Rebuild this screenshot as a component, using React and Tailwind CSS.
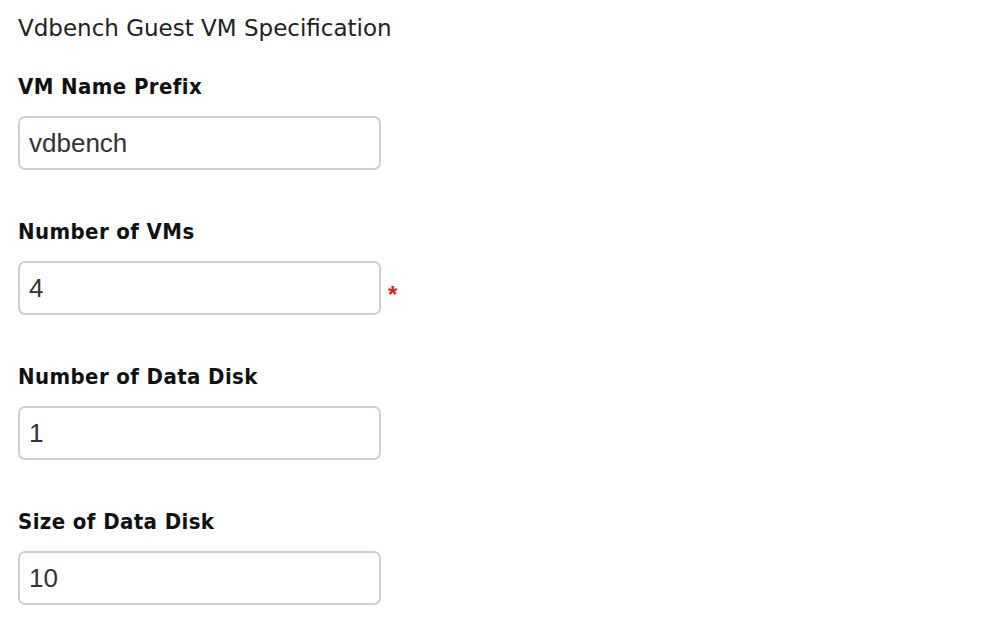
export default function App() {
  const fields = [
    { label: "VM Name Prefix", value: "vdbench" },
    { label: "Number of VMs", value: "4", required: true },
    { label: "Number of Data Disk", value: "1" },
    { label: "Size of Data Disk", value: "10" },
  ];
  return (
    <div className="w-[1000px] h-[629px] bg-white overflow-hidden pl-[18px] pt-[12px]">
      <div
        className="text-[23px] leading-[32px] text-[#222]"
        style={{ fontFamily: '"DejaVu Sans", sans-serif' }}
      >
        Vdbench Guest VM Specification
      </div>
      <div className="flex flex-col gap-[47px] mt-[28px]">
        {fields.map((f) => (
          <div key={f.label} className="flex flex-col">
            <div
              className="text-[22px] leading-[30px] font-bold text-[#111] tracking-[0.4px]"
              style={{ fontFamily: '"DejaVu Sans Condensed", "DejaVu Sans", sans-serif' }}
            >
              {f.label}
            </div>
            <div className="flex items-center mt-[14px]">
              <div
                className="w-[363px] h-[54px] border-2 border-[#cfcfcf] rounded-[7px] flex items-center pl-[9px] text-[26px] text-[#333]"
                style={{ fontFamily: '"Liberation Sans", Arial, sans-serif' }}
              >
                {f.value}
              </div>
              {f.required && (
                <span
                  className="ml-[7px] mt-[14px] text-[24px] leading-none text-[#e02020] font-bold"
                  style={{ fontFamily: '"Liberation Sans", Arial, sans-serif' }}
                >
                  *
                </span>
              )}
            </div>
          </div>
        ))}
      </div>
    </div>
  );
}
